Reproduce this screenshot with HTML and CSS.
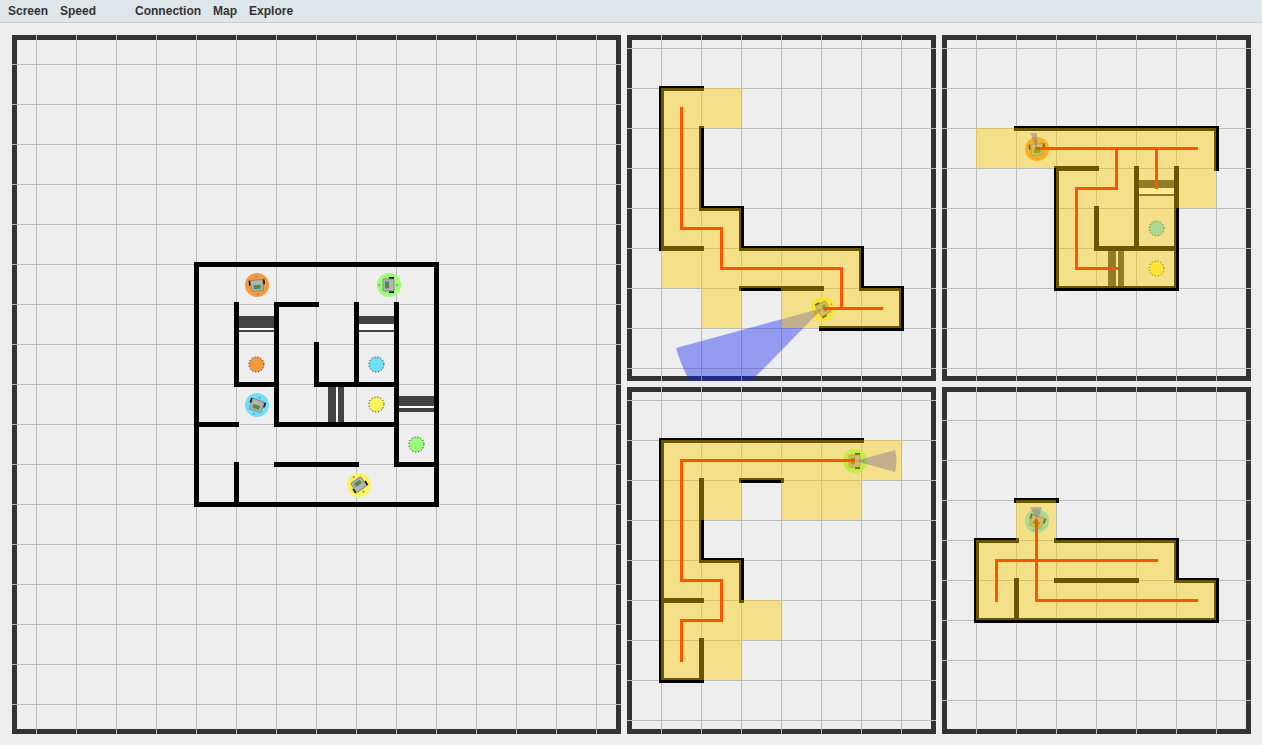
FILE: index.html
```html
<!DOCTYPE html>
<html lang="en">
<head>
  <meta charset="UTF-8">
  <title>Robot exploration</title>
  <link rel="stylesheet" href="styles.css">
</head>
<body>
<div class="menubar">
  <ul class="menu">
    <li>Screen</li>
    <li>Speed</li>
  </ul>
  <ul class="menu menu-right">
    <li>Connection</li>
    <li>Map</li>
    <li>Explore</li>
  </ul>
</div>

<div class="panels">

  <!-- whole maze -->
  <svg class="panel panel-main" viewBox="12 35 609 699">
    <defs>
      <pattern id="gridMain" patternUnits="userSpaceOnUse" x="36" y="64" width="40" height="40">
        <rect class="gridline" width="1" height="40"></rect>
        <rect class="gridline" width="40" height="1"></rect>
      </pattern>
      <g id="robot">
        <circle class="robot-nub" cx="-9.5" cy="0" r="1"></circle>
        <circle class="robot-nub" cx="8" cy="0" r="1"></circle>
        <rect class="robot-wheel" x="0" y="-8" width="5" height="2"></rect>
        <rect class="robot-wheel" x="0" y="6" width="5" height="2"></rect>
        <rect class="robot-body" x="-6" y="-6" width="11" height="12" rx="1"></rect>
        <rect class="robot-board" x="-4" y="-3.5" width="4" height="7"></rect>
      </g>
    </defs>
    <rect class="frame" x="14.5" y="37.5" width="604" height="694"></rect>
    <rect x="12" y="35" width="609" height="699" fill="url(#gridMain)"></rect>

    <path class="wall" d="M196.5 264.5H436.5V504.5H196.5Z"></path>
    <path class="wall" d="M236.5 304.5V384.5H276.5M276.5 424.5V304.5H316.5M316.5 344.5V384.5H396.5M356.5 304.5V384.5M396.5 304.5V464.5H436.5M276.5 424.5H396.5M196.5 424.5H236.5M236.5 464.5V504.5M276.5 464.5H356.5"></path>

    <rect class="door" x="239" y="316" width="35" height="12"></rect>
    <rect class="door-gap" x="239" y="328" width="35" height="2"></rect>
    <rect class="door" x="239" y="330" width="35" height="2"></rect>
    <rect class="door" x="359" y="316" width="35" height="8"></rect>
    <rect class="door-gap" x="359" y="324" width="35" height="6"></rect>
    <rect class="door" x="359" y="330" width="35" height="2"></rect>
    <rect class="door" x="328" y="387" width="8" height="35"></rect>
    <rect class="door-gap" x="336" y="387" width="2" height="35"></rect>
    <rect class="door" x="338" y="387" width="6" height="35"></rect>
    <rect class="door" x="399" y="396" width="35" height="10"></rect>
    <rect class="door-gap" x="399" y="406" width="35" height="2"></rect>
    <rect class="door" x="399" y="408" width="35" height="4"></rect>

    <circle class="goal orange" cx="256.5" cy="364.5" r="7.5"></circle>
    <circle class="goal cyan" cx="376.5" cy="364.5" r="7.5"></circle>
    <circle class="goal yellow" cx="376.5" cy="404.5" r="7.5"></circle>
    <circle class="goal green" cx="416.5" cy="444.5" r="7.5"></circle>

    <circle class="orange" cx="257" cy="285" r="12"></circle>
    <use href="#robot" transform="translate(257 285) rotate(-95)"></use>
    <circle class="green" cx="389" cy="285" r="12"></circle>
    <use href="#robot" transform="translate(389 285)"></use>
    <circle class="cyan" cx="257" cy="405" r="12"></circle>
    <use href="#robot" transform="translate(257 405) rotate(-70)"></use>
    <circle class="yellow" cx="359" cy="485" r="12"></circle>
    <use href="#robot" transform="translate(359 485) rotate(56)"></use>
  </svg>

  <!-- yellow robot -->
  <svg class="panel" viewBox="627 35 309 346">
    <defs>
      <pattern id="gridA" patternUnits="userSpaceOnUse" x="661" y="88" width="40" height="40">
        <rect class="gridline" width="1" height="40"></rect>
        <rect class="gridline" width="40" height="1"></rect>
      </pattern>
    </defs>
    <rect class="frame" x="629.5" y="37.5" width="304" height="341"></rect>
    <rect x="627" y="35" width="309" height="346" fill="url(#gridA)"></rect>

    <path class="wall" d="M701.5 88.5H661.5V248.5H701.5M701.5 128.5V208.5H741.5V248.5H861.5V288.5H901.5V328.5H821.5M741.5 288.5H821.5"></path>

    <circle class="yellow" cx="823" cy="309" r="12"></circle>
    <use href="#robot" transform="translate(823 309) rotate(150)"></use>
    <path class="cone" d="M823 308L676 348A152 152 0 0 0 717 416Z"></path>

    <path class="explored" d="M661 88h80v40h-40v80h40v40h120v40h40v40h-120v-40h-40v40h-40v-40h-40z"></path>
    <path class="route" d="M681.5 107V228.5H721.5V268.5H841.5V308.5M823 308.5H883"></path>
  </svg>

  <!-- orange robot -->
  <svg class="panel" viewBox="942 35 309 346">
    <defs>
      <pattern id="gridB" patternUnits="userSpaceOnUse" x="976" y="88" width="40" height="40">
        <rect class="gridline" width="1" height="40"></rect>
        <rect class="gridline" width="40" height="1"></rect>
      </pattern>
    </defs>
    <rect class="frame" x="944.5" y="37.5" width="304" height="341"></rect>
    <rect x="942" y="35" width="309" height="346" fill="url(#gridB)"></rect>

    <path class="wall" d="M1016.5 128.5H1216.5V168.5M1096.5 168.5H1056.5V288.5H1176.5V168.5M1136.5 168.5V248.5M1096.5 208.5V248.5H1176.5"></path>

    <rect class="door" x="1139" y="180" width="35" height="8"></rect>
    <rect class="door-gap" x="1139" y="188" width="35" height="6"></rect>
    <rect class="door" x="1139" y="194" width="35" height="2"></rect>
    <rect class="door" x="1108" y="251" width="8" height="35"></rect>
    <rect class="door-gap" x="1116" y="251" width="2" height="35"></rect>
    <rect class="door" x="1118" y="251" width="6" height="35"></rect>

    <circle class="goal cyan" cx="1156.5" cy="228.5" r="7.5"></circle>
    <circle class="goal yellow" cx="1156.5" cy="268.5" r="7.5"></circle>

    <circle class="orange" cx="1037" cy="149" r="12"></circle>
    <use href="#robot" transform="translate(1037 149) rotate(-95)"></use>
    <path class="cone" d="M1037 149L1030 133H1037Z"></path>

    <path class="explored" d="M976 128h240v80h-40v80h-120v-120h-80z"></path>
    <path class="route" d="M1035 148.5H1198M1116.5 148.5V188.5H1076.5V268.5H1118M1156.5 148.5V189"></path>
  </svg>

  <!-- green robot -->
  <svg class="panel" viewBox="627 387 309 347">
    <defs>
      <pattern id="gridC" patternUnits="userSpaceOnUse" x="661" y="400" width="40" height="40">
        <rect class="gridline" width="1" height="40"></rect>
        <rect class="gridline" width="40" height="1"></rect>
      </pattern>
    </defs>
    <rect class="frame" x="629.5" y="389.5" width="304" height="342"></rect>
    <rect x="627" y="387" width="309" height="347" fill="url(#gridC)"></rect>

    <path class="wall" d="M861.5 440.5H661.5V680.5H701.5V640.5M661.5 600.5H701.5M701.5 480.5V560.5H741.5V600.5M741.5 480.5H781.5"></path>

    <circle class="green" cx="855" cy="461" r="12"></circle>
    <use href="#robot" transform="translate(855 461)"></use>
    <path class="cone" d="M855 461L895 450A42 42 0 0 1 895 472Z"></path>

    <path class="explored" d="M661 440h240v40h-40v40h-80v-40h-40v40h-40v40h40v40h40v40h-40v40h-80z"></path>
    <path class="route" d="M681.5 662V620.5H721.5V580.5H681.5V460.5H855"></path>
  </svg>

  <!-- cyan robot -->
  <svg class="panel" viewBox="942 387 309 347">
    <defs>
      <pattern id="gridD" patternUnits="userSpaceOnUse" x="976" y="420" width="40" height="40">
        <rect class="gridline" width="1" height="40"></rect>
        <rect class="gridline" width="40" height="1"></rect>
      </pattern>
    </defs>
    <rect class="frame" x="944.5" y="389.5" width="304" height="342"></rect>
    <rect x="942" y="387" width="309" height="347" fill="url(#gridD)"></rect>

    <path class="wall" d="M1016.5 500.5H1056.5M1016.5 540.5H976.5V620.5H1216.5V580.5H1176.5V540.5H1056.5M1016.5 580.5V620.5M1056.5 580.5H1136.5"></path>

    <circle class="cyan" cx="1037" cy="521" r="12"></circle>
    <use href="#robot" transform="translate(1037 521) rotate(-70)"></use>
    <path class="cone" d="M1037 521L1030 507H1042Z"></path>

    <path class="explored" d="M1016 500h40v40h120v40h40v40h-240v-80h40z"></path>
    <path class="route" d="M996.5 602V560.5H1158M1036.5 519V600.5H1198"></path>
  </svg>

</div>
</body>
</html>
```

FILE: styles.css
```css
* {
  padding: 0;
  margin: 0;
}

body {
  background-color: #eee;
  font-family: "Liberation Sans", Arial, sans-serif;
  overflow: hidden;
}

.menubar {
  display: flex;
  height: 22px;
  padding-left: 8px;
  background-color: #dde6e8;
  border-bottom: 1px solid #c9d0d2;
}

.menu {
  display: flex;
  gap: 12px;
  list-style: none;
  font-size: 12px;
  font-weight: bold;
  line-height: 23px;
  color: #333;
}

.menu-right {
  margin-left: 39px;
}

.panels {
  display: grid;
  grid-template-columns: 609px 309px 309px;
  grid-template-rows: 346px 347px;
  gap: 6px;
  padding: 12px 0 0 12px;
}

.panel {
  display: block;
  width: 100%;
  height: 100%;
}

.panel-main {
  grid-row: span 2;
}

.frame {
  fill: #eee;
  stroke: #333;
  stroke-width: 5;
}

.gridline {
  fill: #bbb;
}

.wall {
  fill: none;
  stroke: #000;
  stroke-width: 5;
  stroke-linecap: square;
  stroke-linejoin: miter;
}

.door {
  fill: #444;
}

.door-gap {
  fill: #fff;
}

.goal {
  stroke: #000;
  stroke-width: 1;
  stroke-dasharray: 1 2;
}

.orange {
  fill: #f59a3c;
}

.cyan {
  fill: #70e0fa;
}

.yellow {
  fill: #fbf35a;
}

.green {
  fill: #98ff78;
}

.robot-body {
  fill: #b4b4b4;
  stroke: #888;
  stroke-width: 1;
}

.robot-board {
  fill: #4b8f3f;
}

.robot-wheel {
  fill: #111;
}

.robot-nub {
  fill: #888;
}

.cone {
  fill: #0f20f0;
  fill-opacity: 0.4;
}

.explored {
  fill: #fc0;
  fill-opacity: 0.42;
}

.route {
  fill: none;
  stroke: #f50;
  stroke-width: 3;
}
```
